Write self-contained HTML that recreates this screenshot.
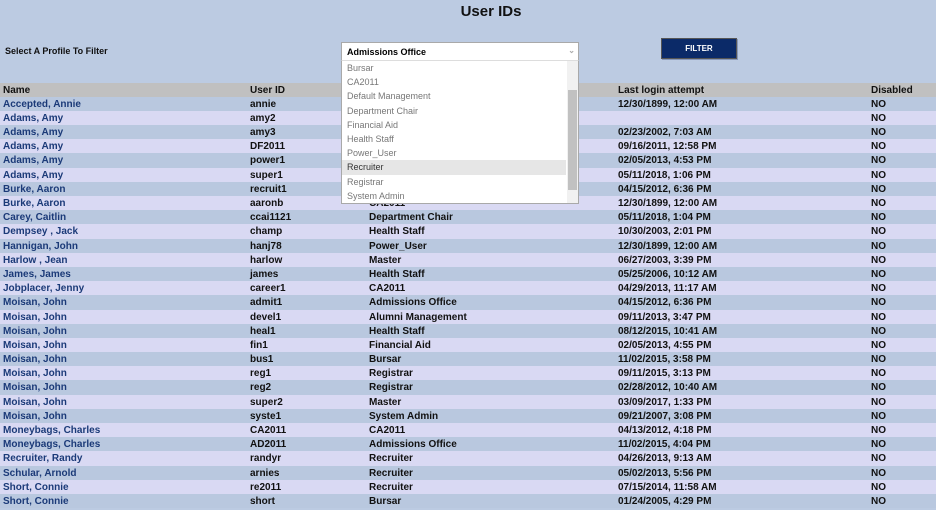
<!DOCTYPE html>
<html><head><style>
body{margin:0;width:936px;height:510px;background:#bccbe2;font-family:"Liberation Sans",Arial,sans-serif;position:relative;overflow:hidden}
h1{position:absolute;left:0;width:982px;top:3px;margin:0;text-align:center;font-size:15px;font-weight:bold;color:#111}
.lbl{position:absolute;left:5px;top:46px;font-size:9px;font-weight:bold;color:#111}
.tbl{position:absolute;left:0;top:82.5px;width:936px}
.r{height:14.2px;position:relative;font-size:10px;font-weight:bold;color:#111;line-height:14.2px}
.r span{position:absolute;top:1px;white-space:nowrap}
.r span:nth-child(1){left:3px;color:#1b3a78}
.r span:nth-child(2){left:250px}
.r span:nth-child(3){left:369px}
.r span:nth-child(4){left:618px}
.r span:nth-child(5){left:871px}
.h{background:#c0c0c0}
.h span:nth-child(1){color:#111 !important}
.o{background:#b9c8df}
.e{background:#d9d9f3}
.sel{position:absolute;left:341px;top:42px;width:236px;height:17px;background:#fff;border:1px solid #a9a9a9;font-size:9px;font-weight:bold;line-height:18px}
.sel b{position:absolute;left:5px}
.sel i{position:absolute;right:3px;top:-1px;color:#aaa;font-style:normal;font-size:8px}
.list{position:absolute;left:341px;top:60px;width:236px;height:142px;background:#fff;border:1px solid #a9a9a9;border-top:1px solid #ddd}
.it{height:14.2px;line-height:15px;font-size:9px;color:#777;padding-left:5px;width:219px}
.it.a{background:#e6e6e6;color:#333}
.sb{position:absolute;right:0;top:0;width:11px;height:142px;background:#f1f1f1}
.th{position:absolute;left:1px;width:9px;top:29px;height:100px;background:#c1c1c1}
.btn{position:absolute;left:661px;top:38px;width:74px;height:19px;background:#0b2a68;border:1px solid #555;color:#fff;font-size:8px;font-weight:bold;text-align:center;line-height:19px;box-shadow:1px 1px 0 #8898b8}
</style></head><body>
<h1>User IDs</h1>
<div class="lbl">Select A Profile To Filter</div>
<div class="tbl">
<div class="r h"><span>Name</span><span>User ID</span><span>Profile</span><span>Last login attempt</span><span>Disabled</span></div>
<div class="r o"><span>Accepted, Annie</span><span>annie</span><span>Admissions Office</span><span>12/30/1899, 12:00 AM</span><span>NO</span></div>
<div class="r e"><span>Adams, Amy</span><span>amy2</span><span></span><span></span><span>NO</span></div>
<div class="r o"><span>Adams, Amy</span><span>amy3</span><span></span><span>02/23/2002, 7:03 AM</span><span>NO</span></div>
<div class="r e"><span>Adams, Amy</span><span>DF2011</span><span></span><span>09/16/2011, 12:58 PM</span><span>NO</span></div>
<div class="r o"><span>Adams, Amy</span><span>power1</span><span></span><span>02/05/2013, 4:53 PM</span><span>NO</span></div>
<div class="r e"><span>Adams, Amy</span><span>super1</span><span></span><span>05/11/2018, 1:06 PM</span><span>NO</span></div>
<div class="r o"><span>Burke, Aaron</span><span>recruit1</span><span></span><span>04/15/2012, 6:36 PM</span><span>NO</span></div>
<div class="r e"><span>Burke, Aaron</span><span>aaronb</span><span>CA2011</span><span>12/30/1899, 12:00 AM</span><span>NO</span></div>
<div class="r o"><span>Carey, Caitlin</span><span>ccai1121</span><span>Department Chair</span><span>05/11/2018, 1:04 PM</span><span>NO</span></div>
<div class="r e"><span>Dempsey , Jack</span><span>champ</span><span>Health Staff</span><span>10/30/2003, 2:01 PM</span><span>NO</span></div>
<div class="r o"><span>Hannigan, John</span><span>hanj78</span><span>Power_User</span><span>12/30/1899, 12:00 AM</span><span>NO</span></div>
<div class="r e"><span>Harlow , Jean</span><span>harlow</span><span>Master</span><span>06/27/2003, 3:39 PM</span><span>NO</span></div>
<div class="r o"><span>James, James</span><span>james</span><span>Health Staff</span><span>05/25/2006, 10:12 AM</span><span>NO</span></div>
<div class="r e"><span>Jobplacer, Jenny</span><span>career1</span><span>CA2011</span><span>04/29/2013, 11:17 AM</span><span>NO</span></div>
<div class="r o"><span>Moisan, John</span><span>admit1</span><span>Admissions Office</span><span>04/15/2012, 6:36 PM</span><span>NO</span></div>
<div class="r e"><span>Moisan, John</span><span>devel1</span><span>Alumni Management</span><span>09/11/2013, 3:47 PM</span><span>NO</span></div>
<div class="r o"><span>Moisan, John</span><span>heal1</span><span>Health Staff</span><span>08/12/2015, 10:41 AM</span><span>NO</span></div>
<div class="r e"><span>Moisan, John</span><span>fin1</span><span>Financial Aid</span><span>02/05/2013, 4:55 PM</span><span>NO</span></div>
<div class="r o"><span>Moisan, John</span><span>bus1</span><span>Bursar</span><span>11/02/2015, 3:58 PM</span><span>NO</span></div>
<div class="r e"><span>Moisan, John</span><span>reg1</span><span>Registrar</span><span>09/11/2015, 3:13 PM</span><span>NO</span></div>
<div class="r o"><span>Moisan, John</span><span>reg2</span><span>Registrar</span><span>02/28/2012, 10:40 AM</span><span>NO</span></div>
<div class="r e"><span>Moisan, John</span><span>super2</span><span>Master</span><span>03/09/2017, 1:33 PM</span><span>NO</span></div>
<div class="r o"><span>Moisan, John</span><span>syste1</span><span>System Admin</span><span>09/21/2007, 3:08 PM</span><span>NO</span></div>
<div class="r e"><span>Moneybags, Charles</span><span>CA2011</span><span>CA2011</span><span>04/13/2012, 4:18 PM</span><span>NO</span></div>
<div class="r o"><span>Moneybags, Charles</span><span>AD2011</span><span>Admissions Office</span><span>11/02/2015, 4:04 PM</span><span>NO</span></div>
<div class="r e"><span>Recruiter, Randy</span><span>randyr</span><span>Recruiter</span><span>04/26/2013, 9:13 AM</span><span>NO</span></div>
<div class="r o"><span>Schular, Arnold</span><span>arnies</span><span>Recruiter</span><span>05/02/2013, 5:56 PM</span><span>NO</span></div>
<div class="r e"><span>Short, Connie</span><span>re2011</span><span>Recruiter</span><span>07/15/2014, 11:58 AM</span><span>NO</span></div>
<div class="r o"><span>Short, Connie</span><span>short</span><span>Bursar</span><span>01/24/2005, 4:29 PM</span><span>NO</span></div>
</div>
<div class="sel"><b>Admissions Office</b><i>&#8964;</i></div>
<div class="list">
<div class="it">Bursar</div><div class="it">CA2011</div><div class="it">Default Management</div><div class="it">Department Chair</div><div class="it">Financial Aid</div><div class="it">Health Staff</div><div class="it">Power_User</div><div class="it a">Recruiter</div><div class="it">Registrar</div><div class="it">System Admin</div>
<div class="sb"><div class="th"></div></div>
</div>
<div class="btn">FILTER</div>
</body></html>
